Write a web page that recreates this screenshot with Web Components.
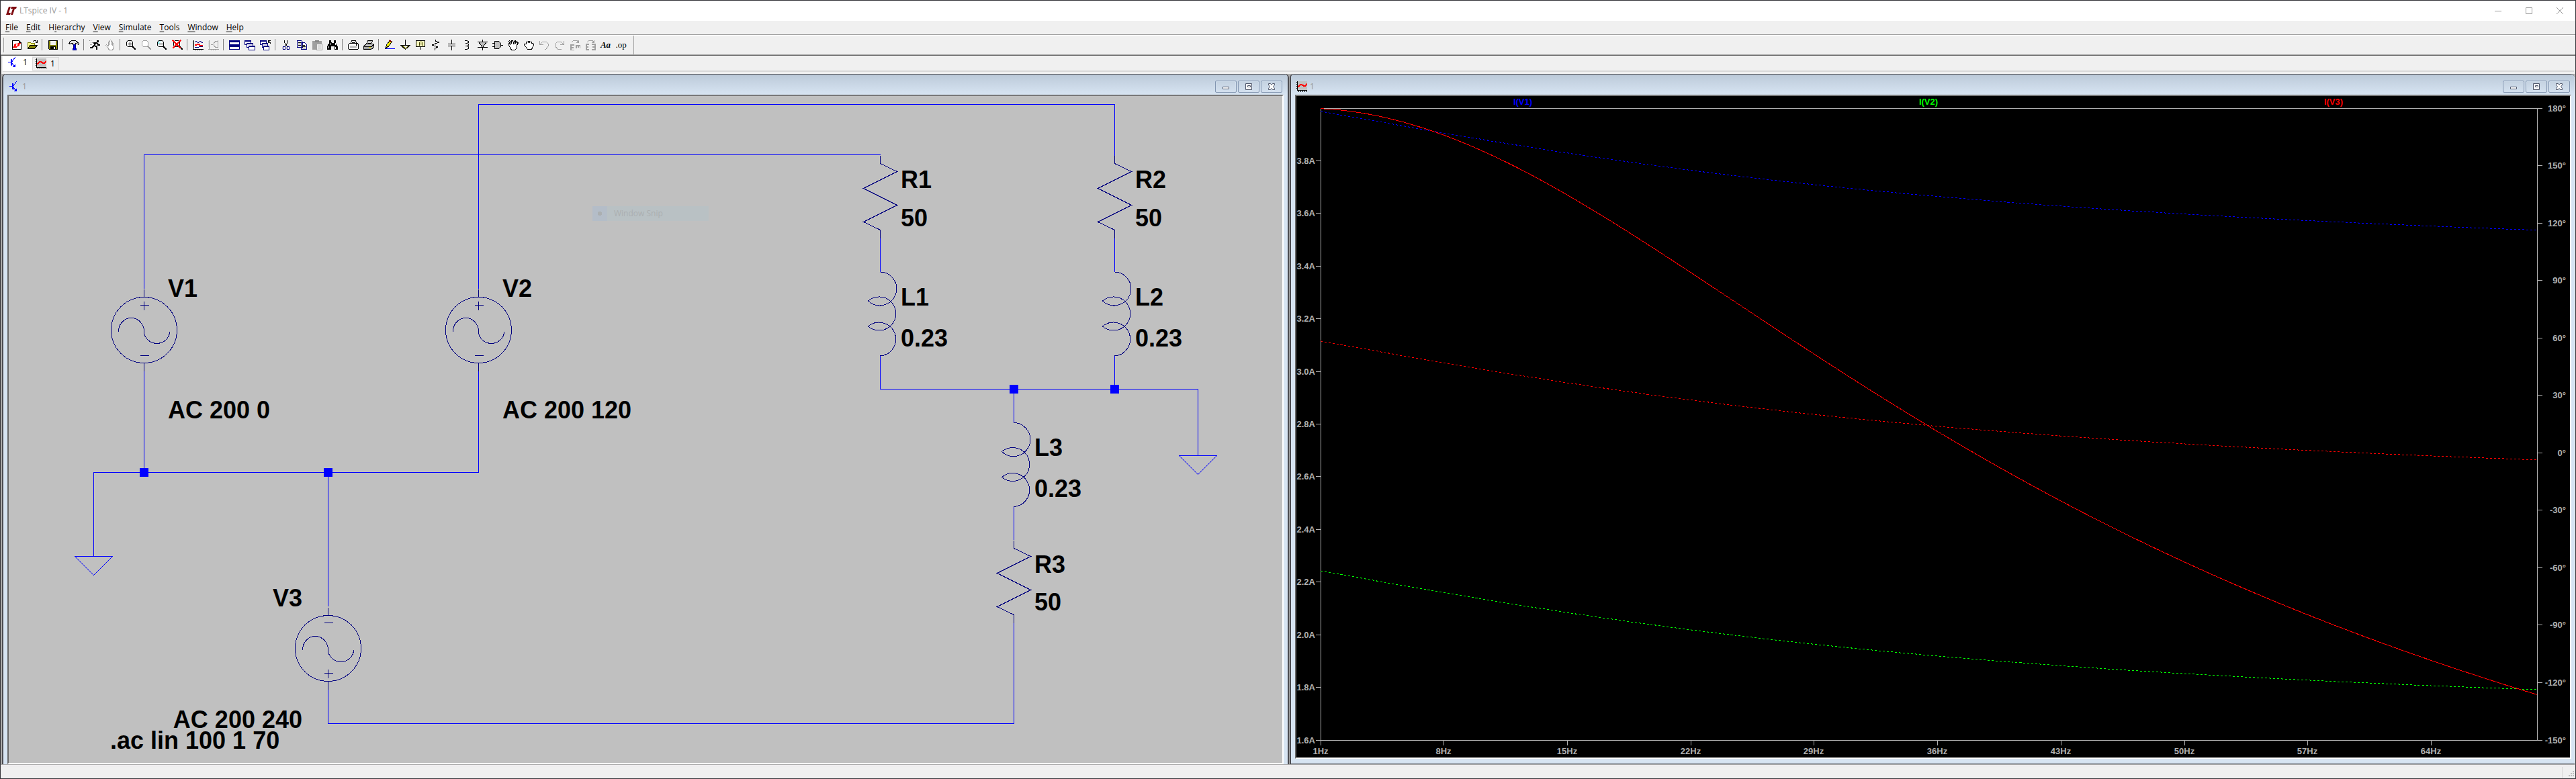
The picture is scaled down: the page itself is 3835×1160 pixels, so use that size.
<!DOCTYPE html>
<html lang="en">
<head>
<meta charset="utf-8">
<title>LTspice IV - 1</title>
<style>
html, body { height: 100%; margin: 0; }
body { font: 12px/16px "Open Sans", "Noto Sans", sans-serif; color: #000; background: #f0f0f0; }
</style>
</head>
<body>
<lt-app>
  <lt-titlebar>LTspice IV - 1</lt-titlebar>
  <lt-menubar></lt-menubar>
  <lt-toolbar></lt-toolbar>
  <lt-tabs></lt-tabs>
  <lt-desktop>
    <lt-window class="schematic" icon="circuit" label="1"><lt-schematic></lt-schematic></lt-window>
    <lt-window class="plot" icon="wave" label="1"><lt-plot></lt-plot></lt-window>
  </lt-desktop>
  <lt-statusbar></lt-statusbar>
</lt-app>

<script>
const K = 'stroke="#000" fill="none"';
const G = 'stroke="#a0a0a0" fill="none"';
const N = 'stroke="#000080" fill="#fff"';
const lens = (c, x, y) => `<circle cx="${x}" cy="${y}" r="5" stroke="${c}" fill="#fff"/><path d="M${x + 4} ${y + 4}l5 5" stroke="${c}" stroke-width="2"/>`;

/* Every glyph is drawn on a 16 by 16 grid. */
const ICONS = {
  circuit: `<path d="M1 7.500h5M6.500 2.500v10M7 6.500L11.500 .5M7 9l4 5.500" stroke="#00f" fill="none"/><path d="M5.500 3v9" stroke="#00f"/><path d="M11.500 11v4h-4z" fill="#00f"/>`,
  wave: `<path d="M1 0h15v14H1z" fill="#c0c0c0"/><path d="M1.500 0v14M1 13.500h15M0 1.500h2M0 4.500h2M0 7.500h2M0 10.500h2M3.500 13v3M6.500 13v3M9.500 13v3M12.500 13v3M15.500 13v3" ${K}/><path d="M2 9l4-4h2l3 2h2l3-3" stroke="#f00" stroke-width="2" fill="none"/>`,
  fresh: `<path d="M1.500 1.500h10l3 3v10h-13z" fill="#fff" stroke="#000"/><path d="M11.500 1.500v3h3" ${K}/><path d="M5 6h3L6 10h3l-1 2H2zM9 5h5l-3 5H8l2-4H8z" fill="#f00"/>`,
  open: `<path d="M1.500 13.500v-9h4l1 1h5v3" fill="#ff8" stroke="#808000"/><path d="M1.500 13.500l3-5h11l-4 5z" fill="#808000" stroke="#000"/><path d="M9 2.500l2-1h2l2 3M15.500 1v3h-3" ${K}/>`,
  save: `<path d="M1.500 1.500h13v13h-12l-1-1z" fill="#808000" stroke="#000"/><path d="M4 2h8v6H4z" fill="#f0f0f0"/><path d="M4 10h8v4H4z" fill="#000"/><path d="M9 11h2v3H9z" fill="#fff"/>`,
  hammer: `<path d="M.5 5.500l2-3 3-1h5l5 4-1 2-3-2h-1v2h-4v-2h-3l-1 1z" fill="#ddd" stroke="#000"/><path d="M7 7h3v6h1v2H6v-2h1z" fill="#00f" stroke="#000080"/>`,
  run: `<path d="M11 1h3v3h-3z" fill="#000"/><path d="M10 4L7 9M6 4.500h5l2 3h3" stroke="#000" stroke-width="2" fill="none"/><path d="M8 9l3 2v4M7 9l-3 3H1" stroke="#000" stroke-width="2" fill="none"/><path d="M0 1.500h4M2 4.500h3M1 7.500h3" stroke="#888" stroke-dasharray="1 1"/>`,
  hand: `<path d="M4.500 11.500l-3-3 1-1 3 2V3.500l1-1 1 1v4-6l1-1 1 1v6-5h1l1 1v5-3h1l1 1v5l-2 4h-5z" stroke="#a0a0a0" fill="#fff"/>`,
  zoomin: lens('#000', 6, 6) + `<path d="M3 6.500h7M6.500 3v7" ${K}/>`,
  zoompan: lens('#a0a0a0', 6, 6),
  zoomout: lens('#000', 6, 6) + `<path d="M3 6.500h7" ${K}/><path d="M3 3h3v1H4v2H3z" fill="#0ff"/>`,
  zoomfit: lens('#000', 7, 6) + `<path d="M1 1l12 12M13 1L1 13" stroke="#f00" stroke-width="2"/>`,
  graph: `<path d="M1.500 1v14M0 14.500h16M0 3.500h2M0 6.500h2M0 9.500h2M4.500 14v2M7.500 14v2M10.500 14v2M13.500 14v2" ${K}/><path d="M3 4l2-2 3 3 3-3 4 3" stroke="#000080" fill="none"/><path d="M3 7.500h3l2-1 3 2h4" stroke="#f00" stroke-width="2" fill="none"/><path d="M3 11.500h5l2-1h5" stroke="#000080" fill="none"/>`,
  bode: `<path d="M1.500 1v14M0 14.500h16M0 3.500h2M0 6.500h2M0 9.500h2M4.500 14v2M7.500 14v2M10.500 14v2M4 7.500h3M15 2.500h-4l-3 3v3l3 3h4M14.500 1v12" ${G}/>`,
  tile: `<path d="M.5 1.500h15v6H.5zM.5 8.500h15v6H.5z" ${N}/><path d="M0 1h16v3H0zM0 8h16v3H0z" fill="#000080"/>`,
  cascade: `<g ${N}><path d="M.5 1.500h9v6h-9z"/><path d="M3.500 5.500h9v6h-9z"/><path d="M6.500 9.500h9v6h-9z"/></g><path d="M0 1h10v2H0zM3 5h10v2H3zM6 9h10v2H6z" fill="#000080"/>`,
  closeall: `<g ${N}><path d="M.5 1.500h9v6h-9z"/><path d="M3.500 5.500h8v6h-8z"/><path d="M5.500 9.500h8v6h-8z"/></g><path d="M0 1h10v2H0zM3 5h9v2H3zM5 9h9v2H5z" fill="#000080"/><path d="M12.500 5V1.500H16M13 2l3 4" ${K}/>`,
  cut: `<path d="M5.500 1v3l4 6M10.500 1v3l-4 6" ${K}/><circle cx="5" cy="12.500" r="2" fill="none" stroke="#000080"/><circle cx="11" cy="12.500" r="2" fill="none" stroke="#000080"/>`,
  copy: `<path d="M1.500 1.500h6l2 2v8h-8zM7.500 4.500h5l3 3v7h-8z" ${N}/><path d="M3 4.500h4M3 6.500h4M3 8.500h4M9 8.500h4M9 10.500h5M9 12.500h5" ${K}/>`,
  paste: `<path d="M1 2h14v13H1z" fill="#a0a0a0"/><path d="M5 1h6v3H5z" fill="#888"/><path d="M7.500 6.500h8v9h-8z" fill="#eee" stroke="#a0a0a0"/><path d="M9 9.500h5M9 12.500h5" ${G}/>`,
  find: `<path d="M3 1h3v3l1 1h2l1-1V1h3v4l3 6v4h-5v-5H6v5H0v-5l3-5z" fill="#000"/><path d="M4 5v3M2 10v3M12 5v3M12 11v3" stroke="#fff"/>`,
  printsetup: `<path d="M3.500 6.500l2-5h6l2 5" fill="#fff" stroke="#000"/><path d="M.5 7.500l2-2h12l1 2v6l-1 1h-13l-1-1z" fill="#fff" stroke="#000"/><path d="M3 9h10v4H3z" fill="#c0c0c0"/><path d="M6 4.500h5M12.500 6v3" ${K}/>`,
  print: `<path d="M4.500 6.500l2-5h7l-2 5" fill="#fff" stroke="#000"/><path d="M.5 9.500l4-3h10l1 2v3l-4 3h-11z" fill="#ccc" stroke="#000"/><path d="M7 3.500h5M6 5.500h5M1 10.500h11l3-3M1 12.500h11" ${K}/><path d="M8 11h3v1H8z" fill="#ff0"/>`,
  pencil: `<path d="M2.500 12l1-4 5-7 3 2-5 7z" fill="#ff0" stroke="#000"/><path d="M8 0l3 2-1 2-3-2z" fill="#800000"/><path d="M1 14l1-4 3 2z" fill="#000"/><path d="M2 13.500h14" stroke="#00f"/>`,
  ground: `<path d="M8.500 0v8" ${K}/><path d="M1.500 8.500h14l-7 6z" stroke="#000" fill="#808000"/><path d="M5 9h7l-3 3z" fill="#f0f0f0"/>`,
  netlabel: `<path d="M1.500 1.500h13v9h-13zM8.500 11v4" stroke="#000" fill="#ffffc0"/><path d="M6.500 9V4.500l1-1h2l1 1V9M6 6.500h5" stroke="#404000" fill="none"/>`,
  resistor: `<path d="M7.500 0v2l5 2-10 4 8 3-4 2v3" ${K}/>`,
  capacitor: `<path d="M8.500 0v6M3 6.500h11M3 9.500h11M8.500 10v6" ${K}/>`,
  inductor: `<path d="M5 1.500h3l2 1v2l-2 1H6h2l2 1v2l-2 1H6h2l2 1v3l-2 1H5" ${K}/>`,
  diode: `<path d="M8.500 0v16M1 3.500h15M1 11.500h15" ${K}/><path d="M2.500 3.500h12l-6 8z" fill="#c0c0c0" stroke="#000"/>`,
  gate: `<path d="M0 5.500h4M0 10.500h4M13 8h3" ${K}/><path d="M3.500 2.500h6l3 3v5l-3 3h-6z" fill="#c0c0c0" stroke="#000"/>`,
  move: `<path d="M3.500 11.500l-3-5 1-1 2 1-2-4 1-1 3 4V1.500h2l1 4 2-4 2 1-2 4 3-3 2 1-2 4v4l-3 3h-5z" fill="#fff" stroke="#000"/>`,
  drag: `<path d="M4.500 11.500l-3-3v-2h3V3.500h2l1 1V2.500h2v2l1-1h2v2h2l1 2-2 5-1 2h-6z" fill="#fff" stroke="#000"/>`,
  undo: `<path d="M1.500 2v5H7M2 7l4-4h5l3 3v4l-3 4h-2" ${G}/>`,
  redo: `<path d="M14.500 2v5H9M14 7l-4-4H5L2 6v4l3 4h6" ${G}/>`,
  rotate: `<path d="M3 4l3-3h5l2 3M13.500 1v3.500H10" ${G}/><path d="M7 7.500H1.500v8H7M1 11.500h5M9 8.500h7M9.500 8v5M12.500 8v4M15.500 8v5" ${G} stroke-width="2"/>`,
  mirror: `<path d="M3 4l3-3h5l2 3M13.500 1v3.500H10" ${G}/><path d="M6 6.500H1.500v8H6M1 10.500h4M10 6.500h5v8h-5M11 10.500h4" ${G} stroke-width="2"/>`,
};
const svg = (name, size = 16) => `<svg viewBox="0 0 16 16" width="${size}" height="${size}" shape-rendering="crispEdges" aria-hidden="true">${ICONS[name]}</svg>`;

class LtElement extends HTMLElement {
  constructor() {
    super();
    this.attachShadow({ mode: 'open' });
  }
  connectedCallback() {
    this.shadowRoot.innerHTML = `<style>
      :host { display: block; box-sizing: border-box; }
      * { box-sizing: border-box; }
      button { font: inherit; color: inherit; background: none; border: 0; margin: 0; padding: 0; }
      svg { display: block; }
      ${this.css()}</style>${this.html()}`;
    this.ready();
  }
  css() { return ''; }
  html() { return '<slot></slot>'; }
  ready() {}
}

customElements.define('lt-app', class extends LtElement {
  css() { return `:host { display: flex; flex-direction: column; height: 100vh; border: 1px solid #333338; background: #f0f0f0; }
    ::slotted(*) { flex: none; } ::slotted(lt-desktop) { flex: 1; min-height: 0; }`; }
});

customElements.define('lt-titlebar', class extends LtElement {
  css() { return `:host { display: flex; align-items: center; height: 30px; padding-left: 8px; background: #fff; color: #999; }
    .name { flex: 1; margin-left: 4px; }
    button { width: 46px; height: 30px; display: grid; place-items: center; }`; }
  html() { return `<svg width="16" height="12" viewBox="0 0 16 12"><path d="M4 0h3L4 9h3l-1 3H0zM8 0h8l-1 3h-2l-3 9H7l3-9H7z" fill="#7f0b10"/></svg>
    <span class="name"><slot></slot></span>
    <button aria-label="Minimize"><svg width="10" height="10"><path d="M0 5.500h10" stroke="#999"/></svg></button>
    <button aria-label="Maximize"><svg width="10" height="10"><path d="M.5 .5h9v9h-9z" fill="none" stroke="#999"/></svg></button>
    <button aria-label="Close"><svg width="10" height="10"><path d="M0 0l10 10M10 0L0 10" stroke="#999"/></svg></button>`; }
});

customElements.define('lt-menubar', class extends LtElement {
  css() { return `:host { height: 22px; border-bottom: 1px solid #fff; }
    nav { display: flex; gap: 12px; height: 21px; padding: 2px 7px; border-bottom: 1px solid #a0a0a0; }
    u { text-underline-offset: 2px; }`; }
  html() {
    const items = ['_File', '_Edit', 'H_ierarchy', '_View', '_Simulate', '_Tools', '_Window', '_Help'];
    return `<nav>${items.map(t => `<button>${t.replace(/_(.)/, '<u>$1</u>')}</button>`).join('')}</nav>`;
  }
});

customElements.define('lt-toolbar', class extends LtElement {
  css() { return `:host { display: flex; align-items: center; height: 30px; padding: 0 0 2px 3px; border-bottom: 1px solid #696969; box-shadow: inset 0 -1px #a0a0a0; }
    .grip { width: 2px; height: 22px; margin-right: 7px; border-right: 1px solid #a0a0a0; }
    .sep { width: 5px; height: 17px; margin-left: 3px; border-left: 1px solid #808080; }
    .end { width: 1px; height: 28px; margin-left: 7px; background: #a0a0a0; }
    button { width: 23px; height: 23px; display: grid; place-items: center; }
    .word { font: italic bold 13px/16px "Liberation Serif", serif; }
    .op { font: 13px/14px "Liberation Serif", serif; }`; }
  html() {
    const order = 'fresh open | save | hammer | run hand | zoomin zoompan zoomout zoomfit | graph bode | tile cascade closeall | cut copy paste find | printsetup print | pencil ground netlabel resistor capacitor inductor diode gate move drag undo redo rotate mirror'.split(' ');
    return `<span class="grip"></span>` +
      order.map(n => n === '|' ? '<span class="sep"></span>' : `<button aria-label="${n}">${svg(n)}</button>`).join('') +
      `<button class="word">Aa</button><button class="op">.op</button><span class="end"></span>`;
  }
});

customElements.define('lt-tabs', class extends LtElement {
  css() { return `:host { height: 27px; padding: 0 2px 3px 2px; border-left: 1px solid #696969; }
    div { display: flex; align-items: flex-end; height: 24px; border-bottom: 3px double #d9d9d9; }
    button { display: flex; align-items: center; gap: 6px; height: 19px; padding: 0 5px 0 4px; border: 1px solid #d9d9d9; border-bottom: 0; }
    .on { height: 23px; gap: 7px; padding: 0 6px 4px 6px; background: #fff; border-color: #fff; margin-bottom: -2px; }`; }
  html() { return `<div role="tablist"><button role="tab" class="on">${svg('circuit')}<span>1</span></button><button role="tab">${svg('wave')}<span>1</span></button></div>`; }
});

customElements.define('lt-desktop', class extends LtElement {
  css() { return `:host { display: flex; gap: 1px; padding: 0 0 1px 2px; background: #ababab; border-right: 1px solid #f0f0f0; border-bottom: 1px solid #fff; }
    ::slotted(.schematic) { flex: 1; min-width: 0; }
    ::slotted(.plot) { flex: 0 0 calc(50% - 2px); min-width: 0; }`; }
});

customElements.define('lt-window', class extends LtElement {
  css() { return `:host { display: flex; flex-direction: column; border: 2px solid #4d4d52; border-top-width: 1px; border-bottom: 0; border-radius: 6px 6px 0 0; padding: 0 6px; background: #d7e4f2; overflow: hidden; }
    :host(.plot) { border-right: 0; border-bottom: 1px solid #4d4d52; padding: 0 5px 7px 6px; }
    header { display: flex; align-items: center; gap: 2px; height: 30px; flex: none; margin: 0 -6px; padding: 5px 8px 0 8px; background: linear-gradient(#bccad9, #d7e4f2); color: #999; }
    :host(.plot) header { margin-right: -5px; padding-right: 7px; }
    header svg { flex: none; }
    .name { flex: 1; margin-left: 2px; }
    button { width: 32px; height: 18px; border: 1px solid #8295b0; border-radius: 2px; box-shadow: inset 0 0 0 1px #d0ddeb; display: grid; place-items: center; }
    main { flex: 1; min-height: 0; display: flex; border: 2px solid #696969; border-top-color: #787878; border-right-color: #fff; border-bottom-color: #fff; }
    ::slotted(*) { flex: 1; min-width: 0; }`; }
  html() {
    const g = d => `<svg width="12" height="10" viewBox="0 0 12 10">${d}</svg>`;
    const s = 'fill="#fff" stroke="#50586c"';
    return `<header>${svg(this.getAttribute('icon'))}<span class="name">${this.getAttribute('label')}</span>
      <button aria-label="Minimize">${g(`<path d="M1.500 5.500h9v3h-9z" ${s}/>`)}</button>
      <button aria-label="Maximize">${g(`<path d="M1.500 .5h9v9h-9z" ${s}/><path d="M4.500 3.500h4v2h-4z" ${s}/>`)}</button>
      <button aria-label="Close">${g(`<path d="M1.500 .5h3L6 2.500 7.500 .5h3v2L8.500 5l2 2.500v2h-3L6 7.500l-1.500 2h-3v-2L3.500 5l-2-2.500z" ${s}/>`)}</button></header>
      <main><slot></slot></main>`;
  }
});

customElements.define('lt-schematic', class extends LtElement {
  css() { return `:host { background: #c0c0c0; overflow: hidden; position: relative; }
    svg.sheet { width: 100%; height: 100%; shape-rendering: crispEdges; }
    .wire { fill: none; stroke: #00f; }
    .part { fill: none; stroke: #000080; }
    .node { fill: #00f; }
    text { font: bold 36px "Liberation Sans", Arial, sans-serif; fill: #000; }
    .snip { position: absolute; left: 869px; top: 164px; display: flex; align-items: center; width: 173px; height: 22px; background: #b9c1c4; color: #abafb1; }
    .snip i { width: 22px; height: 22px; margin-right: 10px; background: radial-gradient(circle, #abafb1 3px, #b4bdc8 3px); }`; }
  html() {
    // Coordinates are sheet pixels; the origin is the sheet's top left corner.
    const source = (x, y, up) => {
      const p = up ? y - 37 : y + 37, m = up ? y + 38 : y - 38;
      return `<g class="part"><circle cx="${x}" cy="${y}" r="49"/><path d="M${x} ${y - 61}v12M${x} ${y + 49}v12M${x - 6} ${p}h13M${x} ${p - 6}v13M${x - 6} ${m}h13M${x - 38} ${y + 2}a19 20 0 0 1 38 0a19 18 0 0 0 38 0"/></g>`;
    };
    const resistor = (x, y) => `<path class="part" d="M${x} ${y - 12}v12l25 12-50 25 50 25-50 25 25 12v12"/>`;
    const inductor = (x, y) => `<path class="part" d="M${x} ${y}A25 25 0 1 1 ${x - 18} ${y + 43}A25 25 0 1 1 ${x - 18} ${y + 81}A25 25 0 1 1 ${x} ${y + 125}"/>`;
    const node = (x, y) => `<rect class="node" x="${x - 6.5}" y="${y - 6.5}" width="13" height="13"/>`;
    const ground = (x, y) => `<path class="wire" d="M${x - 28} ${y}h56l-28 28z"/>`;
    const label = (x, y, t, a = 'start') => `<text x="${x}" y="${y}" text-anchor="${a}">${t}</text>`;
    return `<svg class="sheet">
      <path class="wire" d="M201.500 287V87.500H1297.500V88M201.500 409V560.500M699.500 287V12.500H1646.500V89M699.500 409V560.500H126.500V685M475.500 560V760M475.500 883V934.500H1496.500V784M1297.500 212V262M1646.500 212V262M1297.500 387V436.500H1770.500V535M1646.500 387V436M1496.500 436V487M1496.500 611V661"/>
      ${source(201.5, 348.5, true)}${source(699.5, 348.5, true)}${source(475.5, 822.5, false)}
      ${resistor(1297.5, 100.5)}${resistor(1646.5, 100.5)}${resistor(1496.5, 673.5)}
      ${inductor(1297.5, 262)}${inductor(1646.5, 262)}${inductor(1496.5, 486.5)}
      ${node(201.5, 560.5)}${node(475.5, 560.5)}${node(1496.5, 436.5)}${node(1646.5, 436.5)}
      ${ground(126.5, 685.5)}${ground(1770.5, 535.5)}
      ${label(237, 299, 'V1')}${label(237, 480, 'AC 200 0')}
      ${label(735, 299, 'V2')}${label(735, 480, 'AC 200 120')}
      ${label(437, 760, 'V3', 'end')}${label(437, 941, 'AC 200 240', 'end')}
      ${label(151, 972, '.ac lin 100 1 70')}
      ${label(1328, 137, 'R1')}${label(1328, 194, '50')}${label(1328, 312, 'L1')}${label(1328, 373, '0.23')}
      ${label(1677, 137, 'R2')}${label(1677, 194, '50')}${label(1677, 312, 'L2')}${label(1677, 373, '0.23')}
      ${label(1527, 536, 'L3')}${label(1527, 597, '0.23')}${label(1527, 710, 'R3')}${label(1527, 766, '50')}
    </svg><div class="snip"><i></i>Window Snip</div>`;
  }
});

customElements.define('lt-plot', class extends LtElement {
  css() { return `:host { background: #000; overflow: hidden; }
    svg { width: 100%; height: 100%; shape-rendering: crispEdges; }
    path, polyline { fill: none; }
    .axis { stroke: #b0b0b0; }
    .phase { stroke-dasharray: 3 3; }
    text { font: bold 13px "Liberation Sans", Arial, sans-serif; fill: #b0b0b0; }`; }
  html() { return '<svg></svg>'; }
  ready() {
    this.draw();
    new ResizeObserver(() => this.draw()).observe(this);
  }
  draw() {
    const w = this.clientWidth, h = this.clientHeight;
    if (!w) return;
    const L = 36, R = w - 49, T = 18, B = h - 26, snap = v => Math.floor(v) + 0.5;
    const fx = f => L + (f - 1) / 69 * (R - L);
    const ay = a => T + (4 - a) / 2.4 * (B - T);
    const py = p => T + (180 - p) / 330 * (B - T);
    // Series R-L branch: 50 ohm with 0.23 H, driven by 200 V.
    const reach = f => 2 * Math.PI * f * 0.23;
    const lag = f => Math.atan2(reach(f), 50) * 180 / Math.PI;
    const curve = fn => Array.from({ length: 100 }, (_, i) => 1 + i * 69 / 99).map(f => `${fx(f).toFixed(1)},${fn(f).toFixed(1)}`).join(' ');
    let axis = `M${snap(L)} ${B + 8}V${T + .5}H${R + 8}M${snap(R)} ${T}V${B}M${L - 7} ${snap(B)}H${R + 8}`, text = '';
    for (let i = 1; i <= 12; i++) {
      const y = snap(ay(4 - i * .2));
      axis += `M${L - 7} ${y}h7`;
      text += `<text x="${L - 8}" y="${y + 4.5}" text-anchor="end">${(4 - i * .2).toFixed(1)}A</text>`;
    }
    for (let p = 180; p >= -150; p -= 30) {
      const y = snap(py(p));
      axis += `M${R} ${y}h8`;
      text += `<text x="${R + 43}" y="${y + 4.5}" text-anchor="end">${p}°</text>`;
    }
    for (let f = 1; f < 70; f += 7) {
      axis += `M${snap(fx(f))} ${B}v8`;
      text += `<text x="${snap(fx(f)) - .5}" y="${B + 21}" text-anchor="middle">${f}Hz</text>`;
    }
    [['I(V1)', '#00f', 1], ['I(V2)', '#0f0', 3], ['I(V3)', '#f00', 5]].forEach(([t, c, k]) => {
      text += `<text x="${Math.round(L + (R - L) * k / 6) - 1}" y="13" text-anchor="middle" style="fill:${c}">${t}</text>`;
    });
    this.shadowRoot.querySelector('svg').innerHTML = `<path class="axis" d="${axis}"/>${text}
      <polyline class="phase" stroke="#00f" points="${curve(f => py(180 - lag(f)))}"/>
      <polyline class="phase" stroke="#0f0" points="${curve(f => py(-60 - lag(f)))}"/>
      <polyline class="phase" stroke="#f00" points="${curve(f => py(60 - lag(f)))}"/>
      <polyline stroke="#f00" points="${curve(f => ay(200 / Math.hypot(50, reach(f))))}"/>`;
  }
});

customElements.define('lt-statusbar', class extends LtElement {
  css() { return `:host { display: flex; justify-content: flex-end; height: 19px; padding-top: 1px; border-top: 1px solid #d5d0d5; }
    .pane { width: 1px; background: #d7d7d7; height: 16px; margin-right: 9px; }`; }
  html() { return `<span class="pane"></span><svg width="10" height="16" shape-rendering="crispEdges"><path d="M6 6h2v2H6zM3 9h2v2H3zM6 9h2v2H6zM0 12h2v2H0zM3 12h2v2H3zM6 12h2v2H6z" fill="#bfbfbf"/></svg>`; }
});
</script>
</body>
</html>
